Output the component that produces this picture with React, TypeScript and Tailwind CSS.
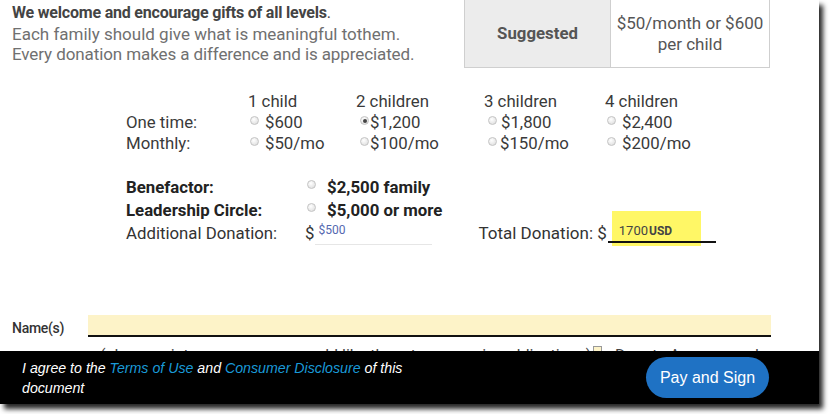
import React from "react";

function Radio({ checked = false }: { checked?: boolean }) {
  return (
    <span className="inline-flex h-[9px] w-[9px] shrink-0 items-center justify-center rounded-full border border-[#c4c4c4] bg-[radial-gradient(circle_at_40%_35%,#ffffff,#d9d9d9)]">
      {checked && <span className="h-[4px] w-[4px] rounded-full bg-[#444]" />}
    </span>
  );
}

type Cell = { ml: string; gap: string; text: string; checked?: boolean };

function Opt({ c }: { c: Cell }) {
  return (
    <div className="flex items-start">
      <span className={`${c.ml} mt-[4px] flex`}>
        <Radio checked={c.checked} />
      </span>
      <span className={c.gap}>{c.text}</span>
    </div>
  );
}

export default function App() {
  const oneTime: Cell[] = [
    { ml: "ml-[2px]", gap: "ml-[6px]", text: "$600" },
    { ml: "ml-[4px]", gap: "ml-[1px]", text: "$1,200", checked: true },
    { ml: "ml-[4px]", gap: "ml-[4px]", text: "$1,800" },
    { ml: "ml-[2px]", gap: "ml-[6px]", text: "$2,400" },
  ];
  const monthly: Cell[] = [
    { ml: "ml-[2px]", gap: "ml-[6px]", text: "$50/mo" },
    { ml: "ml-[4px]", gap: "ml-[1px]", text: "$100/mo" },
    { ml: "ml-[4px]", gap: "ml-[3px]", text: "$150/mo" },
    { ml: "ml-[2px]", gap: "ml-[6px]", text: "$200/mo" },
  ];
  return (
    <div className="h-[414px] w-[830px] bg-white">
      <div className="relative h-[404px] w-[819px] overflow-hidden bg-white font-['Roboto',sans-serif] text-[17px] text-[#333] shadow-[4px_5px_5px_rgba(0,0,0,0.85)]">
        {/* header */}
        <div className="flex">
          <div className="pl-[12px] pt-[3px]">
            <div className="h-[21px] text-[16px] font-bold leading-[20px] tracking-[-0.2px] text-[#444]">
              We welcome and encourage gifts of all levels<span className="font-normal">.</span>
            </div>
            <div className="leading-[20px] text-[#707070]">Each family should give what is meaningful tothem.</div>
            <div className="leading-[21px] tracking-[-0.1px] text-[#707070]">Every donation makes a difference and is appreciated.</div>
          </div>
          <div className="ml-auto mr-[49px] flex h-[68px] w-[306px] shrink-0 border border-t-0 border-[#cfcfcf]">
            <div className="flex w-[146px] items-center justify-center border-r border-[#cfcfcf] bg-[#ececec] text-[16.8px] font-bold text-[#555]">
              Suggested
            </div>
            <div className="flex flex-1 items-center justify-center text-center leading-[21px] text-[#555]">
              $50/month or $600
              <br />
              per child
            </div>
          </div>
        </div>

        {/* options grid */}
        <div className="ml-[126px] mt-[23px] grid grid-cols-[122px_108px_128px_121px_auto] text-[16.8px] text-[#3a3a3a]">
          <div className="h-[21px]" />
          <div className="h-[21px] leading-[21px]">1 child</div>
          <div className="h-[21px] leading-[21px]">2 children</div>
          <div className="h-[21px] leading-[21px]">3 children</div>
          <div className="h-[21px] leading-[21px]">4 children</div>
          <div className="h-[21px] leading-[21px]">One time:</div>
          {oneTime.map((c, i) => (
            <div key={i} className="h-[21px] leading-[21px]">
              <Opt c={c} />
            </div>
          ))}
          <div className="h-[20px] leading-[20px]">Monthly:</div>
          {monthly.map((c, i) => (
            <div key={i} className="h-[20px] leading-[20px]">
              <Opt c={c} />
            </div>
          ))}
        </div>

        {/* benefactor */}
        <div className="ml-[126px] mt-[24px] text-[16.8px] text-[#222]">
          <div className="flex h-[23px] items-start leading-[20px]">
            <div className="w-[179px] font-bold">Benefactor:</div>
            <span className="ml-[2px] mt-[3px] flex">
              <Radio />
            </span>
            <span className="ml-[11px] font-bold">$2,500 family</span>
          </div>
          <div className="flex h-[23px] items-start leading-[20px]">
            <div className="w-[179px] font-bold">Leadership Circle:</div>
            <span className="ml-[2px] mt-[3px] flex">
              <Radio />
            </span>
            <span className="ml-[11px] font-bold">$5,000 or more</span>
          </div>
          <div className="flex h-[22px] items-start leading-[20px] text-[#333]">
            <div className="w-[179px]">Additional Donation:</div>
            <span>$</span>
            <div className="ml-[1px] mt-[-1px] h-[23px] w-[117px] border-b border-[#e6e6e6] pl-[3px] text-[12px] leading-[16px] text-[#5468b0]">
              $500
            </div>
            <span className="ml-[46px] text-[17px]">Total Donation: $</span>
            <div className="relative ml-[1px] mt-[-12px] h-[35px] w-[108px]">
              <div className="ml-[4px] flex h-[35px] w-[89px] items-start bg-[#fff766] pl-[7px] pt-[12px]">
                <span className="text-[13px] leading-[16px] text-[#444]">1700</span>
                <span className="ml-[1px] text-[12px] font-bold leading-[17px] text-[#444]">USD</span>
              </div>
              <div className="absolute bottom-[3px] left-0 h-[2px] w-[108px] bg-[#111]" />
            </div>
          </div>
        </div>

        {/* names */}
        <div className="mt-[70px] flex items-end">
          <div className="w-[88px] pl-[12px] text-[14px] font-medium leading-[18px] tracking-[-0.3px] text-[#333]">Name(s)</div>
          <div className="h-[22px] w-[683px] border-b-2 border-[#111] bg-[#fdf3c8]" />
        </div>
        <div className="mt-[9px] flex items-start text-[16px] leading-[20px] text-[#444]">
          <span className="w-[593px] shrink-0 overflow-hidden whitespace-nowrap pl-[100px]">(please print names as you would like them to appear in publications)</span>
          <span className="h-[12px] w-[9px] shrink-0 border border-[#999] bg-[#fdf3c8]" />
          <span className="ml-[13px] whitespace-nowrap">Donate Anonymously</span>
        </div>

        {/* footer bar */}
        <div className="absolute bottom-0 left-0 flex h-[53px] w-[819px] items-center bg-black font-['Liberation_Sans',Arial,sans-serif]">
          <div className="ml-[22px] w-[400px] text-[14.2px] italic leading-[20px] text-white">
            I agree to the <span className="text-[#1a9ad8]">Terms of Use</span> and{" "}
            <span className="text-[#1a9ad8]">Consumer Disclosure</span> of this document
          </div>
          <button className="ml-auto mr-[50px] h-[41px] w-[123px] rounded-full bg-[#1f72c4] text-[16px] text-white">
            Pay and Sign
          </button>
        </div>
      </div>
    </div>
  );
}
